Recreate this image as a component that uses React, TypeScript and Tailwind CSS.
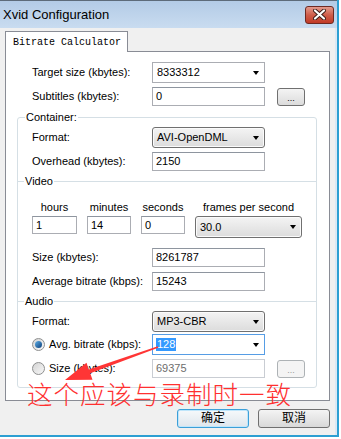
const Arrow = () => (
  <span className="ml-auto mr-[5px] h-0 w-0 border-x-[3.5px] border-t-[4px] border-x-transparent border-t-black" />
);

const Edit = ({ value, h = "h-[19px]", w = "w-[113px]", muted = false }: { value: string; h?: string; w?: string; muted?: boolean }) => (
  <div
    className={`${h} ${w} flex items-center border border-[#abadb3] border-t-[#8e959f] bg-white pl-[3px] ${
      muted ? "text-[#6d6d6d] border-[#c9cdd3] border-t-[#c9cdd3]" : "text-black"
    }`}
  >
    {value}
  </div>
);

const Drop = ({ value, w = "w-[113px]", h = "h-[21px]" }: { value: string; w?: string; h?: string }) => (
  <div
    className={`${h} ${w} flex items-center rounded-[3px] border border-[#707070] bg-gradient-to-b from-[#f4f4f4] to-[#dcdcdc] pl-[4px] shadow-[inset_0_0_0_1px_#fbfbfb]`}
  >
    {value}
    <Arrow />
  </div>
);

const Dots = ({ disabled = false }: { disabled?: boolean }) => (
  <div
    className={`ml-[12px] flex h-[18px] w-[28px] items-end justify-center rounded-[3px] border pb-[2px] text-[9px] leading-none ${
      disabled
        ? "border-[#adb2b5] bg-[#f4f4f4] text-[#9a9a9a]"
        : "border-[#707070] bg-gradient-to-b from-[#f4f4f4] to-[#dcdcdc] text-black"
    }`}
  >
    ...
  </div>
);

const Radio = ({ on = false }: { on?: boolean }) => (
  <span className="flex h-[13px] w-[13px] items-center justify-center rounded-full border border-[#8e8f8f] bg-gradient-to-br from-[#d4d4d4] to-[#f8f8f8]">
    {on && <span className="h-[7px] w-[7px] rounded-full bg-gradient-to-br from-[#5fb0e8] to-[#0d3f7a]" />}
  </span>
);

const Sep = ({ label }: { label: string }) => (
  <div className="flex h-[13px] items-center">
    <div className="h-px w-[6px] bg-[#d5dfe5]" />
    <span className="px-px">{label}</span>
    <div className="h-px flex-1 bg-[#d5dfe5]" />
  </div>
);

export default function App() {
  return (
    <div className="h-[439px] w-[341px] bg-white font-['Liberation_Sans','Noto_Sans_CJK_SC',sans-serif] text-[11px] leading-[13px] text-black">
      <div className="relative flex h-[437px] w-[339px] flex-col border-b-2 border-r-2 border-[#2d9fd2]">
        {/* title bar */}
        <div className="flex h-[28px] items-center border-t border-[#5d6b7a] bg-gradient-to-b from-[#b3cbe6] to-[#c9dcf0] pl-[3px] pr-[3px]">
          <span className="text-[13px]">Xvid Configuration</span>
          <div className="ml-auto flex h-[18px] w-[29px] items-center justify-center rounded-[3px] border border-[#6e2a22] bg-gradient-to-b from-[#e29a8c] via-[#cf5c49] to-[#c13a26]">
            <svg width="13" height="11" viewBox="0 0 13 11">
              <path d="M2 1.5 L11 9.5 M11 1.5 L2 9.5" stroke="#3a1a16" strokeWidth="4" strokeLinecap="round" />
              <path d="M2 1.5 L11 9.5 M11 1.5 L2 9.5" stroke="#fff" strokeWidth="2.2" strokeLinecap="round" />
            </svg>
          </div>
        </div>

        {/* client */}
        <div className="flex flex-1 flex-col border-r-2 border-[#dbe8f4] bg-[#f0f0f0] pl-[5px] pr-[5px] pt-[3px]">
          <div className="relative z-10 -mb-px flex h-[21px] w-[123px] items-center border border-b-0 border-[#898c95] bg-white pl-[7px] font-['Liberation_Mono',monospace] text-[10px]">
            Bitrate Calculator
          </div>
          <div className="flex h-[350px] flex-col border border-[#898c95] bg-white">
            {/* top rows */}
            <div className="mt-[10px] flex items-center pl-[26px]">
              <span className="w-[120px]">Target size (kbytes):</span>
              <div className="flex h-[21px] w-[113px] items-center border border-[#abadb3] bg-white pl-[4px]">
                8333312
                <Arrow />
              </div>
            </div>
            <div className="mt-[4px] flex items-center pl-[26px]">
              <span className="w-[120px]">Subtitles (kbytes):</span>
              <Edit value="0" />
              <Dots />
            </div>

            <fieldset className="ml-[11px] mr-[12px] mt-[5px] rounded-[3px] border border-[#d5dfe5] pb-[9px]">
              <legend className="ml-[7px] px-px">Container:</legend>
              <div className="mt-[3px] flex items-center pl-[14px]">
                <span className="w-[120px]">Format:</span>
                <Drop value="AVI-OpenDML" />
              </div>
              <div className="mt-[4px] flex items-center pl-[14px]">
                <span className="w-[120px]">Overhead (kbytes):</span>
                <Edit value="2150" />
              </div>

              <div className="mt-[4px]">
                <Sep label="Video" />
              </div>
              <div className="mt-[13px] grid grid-cols-[45px_44px_44px_107px] gap-x-[10px] pl-[14px]">
                <span className="text-center">hours</span>
                <span className="text-center">minutes</span>
                <span className="text-center">seconds</span>
                <span className="text-center">frames per second</span>
              </div>
              <div className="mt-[2px] grid grid-cols-[45px_44px_44px_107px] items-start gap-x-[10px] pl-[14px]">
                <Edit value="1" h="h-[18px]" w="w-[45px]" />
                <Edit value="14" h="h-[18px]" w="w-[44px]" />
                <Edit value="0" h="h-[18px]" w="w-[44px]" />
                <Drop value="30.0" w="w-[107px]" h="h-[22px]" />
              </div>
              <div className="mt-[10px] flex items-center pl-[14px]">
                <span className="w-[120px]">Size (kbytes):</span>
                <Edit value="8261787" />
              </div>
              <div className="mt-[5px] flex items-center pl-[14px]">
                <span className="w-[120px]">Average bitrate (kbps):</span>
                <Edit value="15243" />
              </div>

              <div className="mt-[4px]">
                <Sep label="Audio" />
              </div>
              <div className="mt-[3px] flex items-center pl-[14px]">
                <span className="w-[120px]">Format:</span>
                <Drop value="MP3-CBR" />
              </div>
              <div className="mt-[2px] flex items-center pl-[14px]">
                <span className="flex w-[120px] items-center gap-[4px]">
                  <Radio on />
                  Avg. bitrate (kbps):
                </span>
                <div className="flex h-[21px] w-[113px] items-center border border-[#569de5] bg-white pl-[3px]">
                  <span className="bg-[#3399ff] px-px text-white">128</span>
                  <Arrow />
                </div>
              </div>
              <div className="mt-[4px] flex items-center pl-[14px]">
                <span className="flex w-[120px] items-center gap-[4px]">
                  <Radio />
                  Size (kbytes):
                </span>
                <Edit value="69375" muted />
                <Dots disabled />
              </div>
            </fieldset>
          </div>

          <div className="mt-[8px] flex justify-end gap-[9px] text-[12px]">
            <div className="flex h-[19px] w-[72px] items-center justify-center rounded-[3px] border border-[#3c9fd8] bg-gradient-to-b from-[#f6f9fb] to-[#dfe6ec] shadow-[inset_0_0_0_1px_#bfe6fb]">
              确定
            </div>
            <div className="flex h-[19px] w-[72px] items-center justify-center rounded-[3px] border border-[#707070] bg-gradient-to-b from-[#f4f4f4] to-[#d9d9d9]">
              取消
            </div>
          </div>
        </div>

        {/* red annotation */}
        <svg className="pointer-events-none absolute left-0 top-0" width="339" height="437">
          <polygon
            points="157.8,346.3 88.8,369.4 86.5,362.8 65,380 92.5,379.8 90.2,373.2 158.2,347.7"
            fill="#ff3535"
          />
        </svg>
        <div className="pointer-events-none absolute left-[27px] top-[383px] text-[25.5px] font-light leading-none tracking-[1px] text-[#ff3030]">
          这个应该与录制时一致
        </div>
      </div>
    </div>
  );
}
